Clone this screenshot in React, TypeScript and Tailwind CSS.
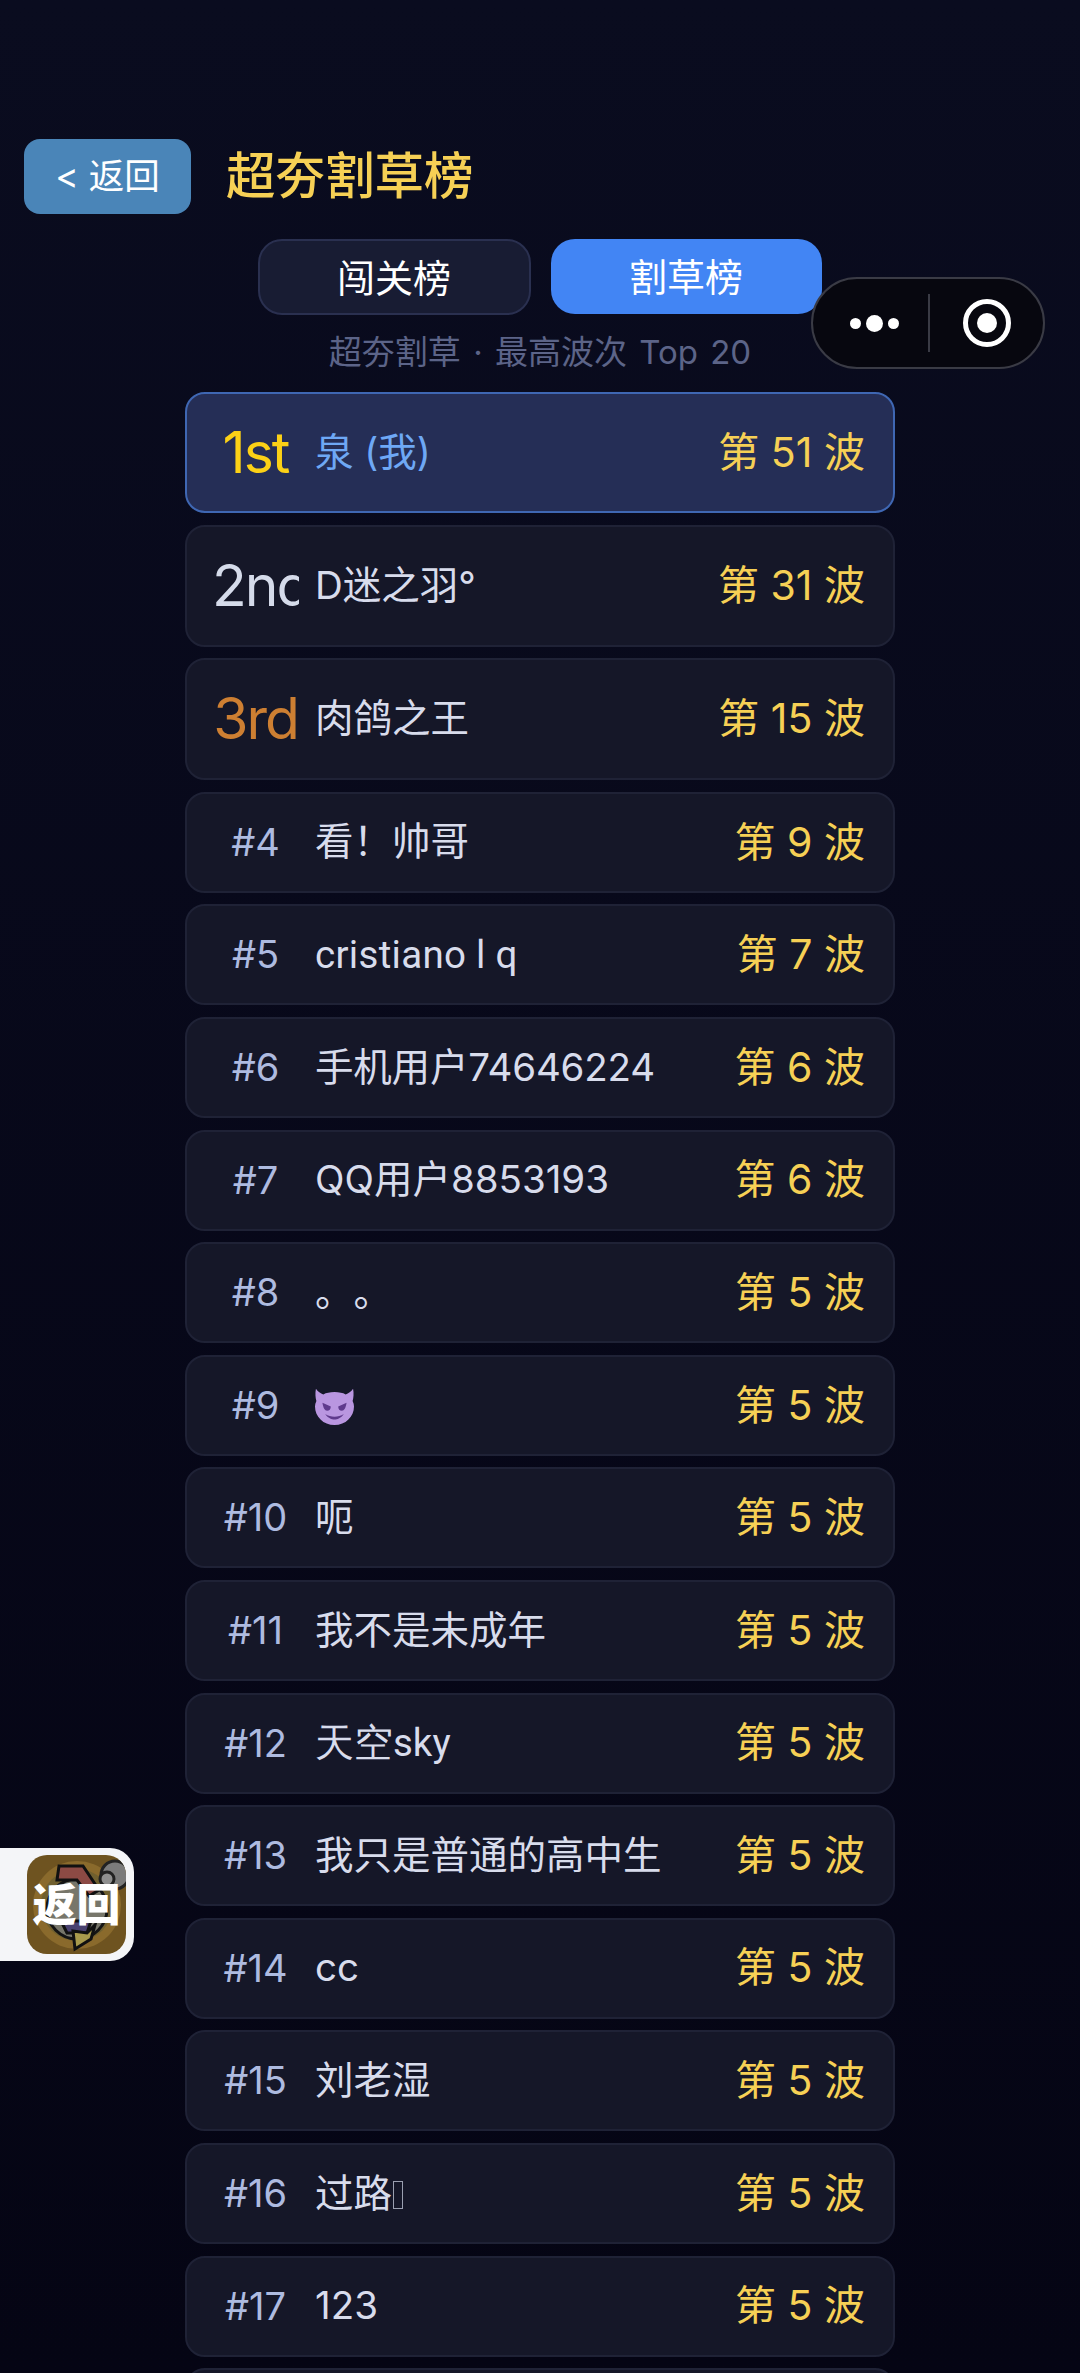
import React from "react";

const rows: { rank: string; name: React.ReactNode; wave: number }[] = [
  { rank: "#4", name: "看！帅哥", wave: 9 },
  { rank: "#5", name: <span className="font-[Roboto] tracking-[0.3px]">cristiano l q</span>, wave: 7 },
  { rank: "#6", name: <span className="tracking-[-0.2px]">手机用户74646224</span>, wave: 6 },
  { rank: "#7", name: "QQ用户8853193", wave: 6 },
  { rank: "#8", name: "。。", wave: 5 },
  { rank: "#9", name: <Devil />, wave: 5 },
  { rank: "#10", name: "呃", wave: 5 },
  { rank: "#11", name: "我不是未成年", wave: 5 },
  { rank: "#12", name: <span className="font-[Roboto]">天空sky</span>, wave: 5 },
  { rank: "#13", name: "我只是普通的高中生", wave: 5 },
  { rank: "#14", name: "cc", wave: 5 },
  { rank: "#15", name: "刘老湿", wave: 5 },
  {
    rank: "#16",
    name: (
      <span className="flex items-center">
        过路
        <span className="ml-[1px] mt-[4px] h-[28px] w-[10px] border border-[#9a9fb0]" />
      </span>
    ),
    wave: 5,
  },
  { rank: "#17", name: "123", wave: 5 },
  { rank: "#18", name: "", wave: 5 },
];

function Devil() {
  return (
    <svg width="39" height="39" viewBox="0 0 42 42" className="mt-[2px]">
      <path d="M1 2c2 3 5 5 8 6 3-1.500 7-2.500 12-2.500S30 6.500 33 8c3-1 6-3 8-6 1 5 .5 10-.5 13 1 2 1.500 4 1.500 6 0 11-9 20-21 20S0 32 0 21c0-2 .5-4 1.500-6C.5 12 0 7 1 2z" fill="#b996e0" />
      <path d="M8 17l9 4c0 3-1.500 4.500-4 4.500S9 23 8 17zM34 17l-9 4c0 3 1.500 4.500 4 4.500S33 23 34 17z" fill="#5f3a8c" />
      <path d="M11 29c3 4.500 7 6 10 6s7-1.500 10-6c-3 2-6.500 3-10 3s-7-1-10-3z" fill="#5f3a8c" />
    </svg>
  );
}

function Wave({ n }: { n: number }) {
  return <span className="shrink-0 text-[41px] text-[#f6d055]">第 {n} 波</span>;
}

function TopRow({ rank, color, name, wave, me }: { rank: string; color: string; name: string; wave: number; me?: boolean }) {
  return (
    <div
      className={`flex items-center rounded-[20px] border-2 pl-[25px] pr-[28px] ${
        me ? "h-[121px] border-[#3f67b3] bg-[#252e56]" : "h-[122px] border-[#1f2236] bg-[#151728]"
      }`}
    >
      <div className={`w-[87px] shrink-0 overflow-hidden whitespace-nowrap text-center text-[57px] tracking-[-2px] ${color}`}>{rank}</div>
      <div className={`ml-[16px] flex-1 text-[38.500px] ${me ? "text-[#6ea8f5]" : "text-[#d8dcec]"}`}>{name}</div>
      <Wave n={wave} />
    </div>
  );
}

export default function App() {
  return (
    <div
      className="relative h-[2373px] w-[1080px] overflow-hidden bg-gradient-to-b from-[#0a0c1f] to-[#050514] pt-[139px] [text-spacing-trim:space-all]"
      style={{ fontFamily: 'Inter, "Noto Sans CJK SC", sans-serif' }}
    >
      <div className="flex items-center pl-[24px]">
        <div className="flex h-[75px] w-[167px] items-center justify-center rounded-[16px] bg-[#4a85b8] text-[35.500px] text-white">
          &lt; 返回
        </div>
        <h1 className="ml-[35px] text-[49.500px] font-medium text-[#f6d055]">超夯割草榜</h1>
      </div>

      <div className="mt-[25px] flex justify-center gap-[20px] pr-[1px]">
        <div className="flex h-[76px] w-[273px] items-center justify-center rounded-[24px] border-2 border-[#2a3050] bg-[#181c33] pt-[2px] text-[38px] text-white">
          闯关榜
        </div>
        <div className="flex h-[75px] w-[271px] items-center justify-center rounded-[24px] bg-[#4285f4] pt-[2px] text-[38px] text-white">
          割草榜
        </div>
      </div>

      <p className="mt-[14px] text-center text-[33px] leading-[46px] text-[#5c6488] [word-spacing:3px]">超夯割草 · 最高波次 Top 20</p>

      <div className="mx-[185px] mt-[17px] flex flex-col gap-[11.600px]">
        <TopRow rank="1st" color="text-[#fcd116]" name="泉 (我)" wave={51} me />
        <TopRow rank="2nd" color="text-[#d5dbea]" name="D迷之羽°" wave={31} />
        <TopRow rank="3rd" color="text-[#cd7f32]" name="肉鸽之王" wave={15} />
        {rows.map((r) => (
          <div
            key={r.rank}
            className="flex h-[101px] shrink-0 items-center rounded-[20px] border-2 border-[#1f2236] bg-[#151728] pl-[25px] pr-[28px]"
          >
            <div className="w-[87px] shrink-0 text-center text-[38px] text-[#aebbe0]">{r.rank}</div>
            <div className="ml-[16px] flex-1 text-[38.500px] text-[#d8dcec]">{r.name}</div>
            <Wave n={r.wave} />
          </div>
        ))}
      </div>

      {/* wechat capsule */}
      <div className="absolute left-[811px] top-[277px] flex h-[92px] w-[234px] items-center rounded-full border-2 border-[#3a3b45] bg-[#07070f]">
        <div className="flex w-[115px] items-center justify-center gap-[5px] pl-[8px]">
          <span className="h-[11px] w-[11px] rounded-full bg-white" />
          <span className="h-[17px] w-[17px] rounded-full bg-white" />
          <span className="h-[11px] w-[11px] rounded-full bg-white" />
        </div>
        <div className="h-[58px] w-[2px] bg-[#3a3b45]" />
        <div className="flex flex-1 items-center justify-center">
          <div className="flex h-[48px] w-[48px] items-center justify-center rounded-full border-[5px] border-white">
            <span className="h-[20px] w-[20px] rounded-full bg-white" />
          </div>
        </div>
      </div>

      {/* floating back */}
      <div className="absolute left-0 top-[1848px] flex h-[113px] w-[134px] items-center justify-end rounded-r-[24px] bg-[#f4f5f8] pr-[8px]">
        <div className="relative h-[99px] w-[99px] overflow-hidden rounded-[20px] bg-[#6e5320]">
          <svg viewBox="0 0 99 99" className="absolute inset-0 h-full w-full">
            <circle cx="50" cy="50" r="44" fill="#8a6a2c" />
            <circle cx="50" cy="50" r="36" fill="#70602f" />
            <circle cx="50" cy="54" r="30" fill="#77766a" stroke="#141414" strokeWidth="3" />
            <path d="M32 11l24 0 16 24-10 6-12-16-20 0z" fill="#8c4a44" stroke="#111" strokeWidth="3" />
            <circle cx="88" cy="20" r="14" fill="#7b7b7b" stroke="#222" strokeWidth="3" />
            <circle cx="80" cy="24" r="7" fill="#8f8f8f" stroke="#222" strokeWidth="3" />
            <path d="M34 66h30l-4 12H40z" fill="#4a4270" stroke="#111" strokeWidth="3" />
            <path d="M48 94l-2-18 14 2 8-8-4 14z" fill="#a89a4c" stroke="#111" strokeWidth="3" />
          </svg>
          <div className="absolute inset-0 flex items-center justify-center whitespace-nowrap text-[44px] font-black text-white">
            返回
          </div>
        </div>
      </div>
    </div>
  );
}
